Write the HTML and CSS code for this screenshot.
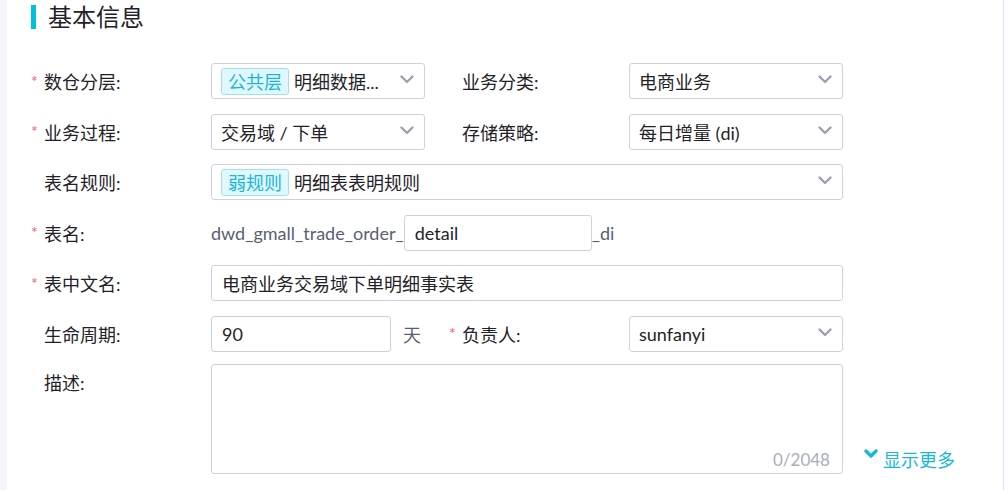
FILE: index.html
```html
<!DOCTYPE html>
<html lang="zh-CN">
<head>
<meta charset="utf-8">
<title>基本信息</title>
<link rel="stylesheet" href="styles.css">
</head>
<body>
<div class="page">
  <div class="card">
    <h2 class="title">基本信息</h2>
    <div class="form">
      <div class="label c1"><span class="star">*</span>数仓分层:</div>
      <div class="select c2">
        <span class="tag">公共层</span><span class="val">明细数据...</span>
        <svg class="chev" width="14" height="9" viewBox="0 0 14 9"><polyline points="1.5,1.5 7,7 12.5,1.5" fill="none" stroke="#9ba1b6" stroke-width="2.4" stroke-linecap="round" stroke-linejoin="round"/></svg>
      </div>
      <div class="label c4"><span class="star"></span>业务分类:</div>
      <div class="select c5">
        <span class="val">电商业务</span>
        <svg class="chev" width="14" height="9" viewBox="0 0 14 9"><polyline points="1.5,1.5 7,7 12.5,1.5" fill="none" stroke="#9ba1b6" stroke-width="2.4" stroke-linecap="round" stroke-linejoin="round"/></svg>
      </div>

      <div class="label c1"><span class="star">*</span>业务过程:</div>
      <div class="select c2">
        <span class="val">交易域 / 下单</span>
        <svg class="chev" width="14" height="9" viewBox="0 0 14 9"><polyline points="1.5,1.5 7,7 12.5,1.5" fill="none" stroke="#9ba1b6" stroke-width="2.4" stroke-linecap="round" stroke-linejoin="round"/></svg>
      </div>
      <div class="label c4"><span class="star"></span>存储策略:</div>
      <div class="select c5">
        <span class="val">每日增量 (di)</span>
        <svg class="chev" width="14" height="9" viewBox="0 0 14 9"><polyline points="1.5,1.5 7,7 12.5,1.5" fill="none" stroke="#9ba1b6" stroke-width="2.4" stroke-linecap="round" stroke-linejoin="round"/></svg>
      </div>

      <div class="label c1"><span class="star"></span>表名规则:</div>
      <div class="select wide">
        <span class="tag">弱规则</span><span class="val">明细表表明规则</span>
        <svg class="chev" width="14" height="9" viewBox="0 0 14 9"><polyline points="1.5,1.5 7,7 12.5,1.5" fill="none" stroke="#9ba1b6" stroke-width="2.4" stroke-linecap="round" stroke-linejoin="round"/></svg>
      </div>

      <div class="label c1"><span class="star">*</span>表名:</div>
      <div class="wide namerow">
        <span class="affix">dwd_gmall_trade_order_</span>
        <div class="input name-input">detail</div>
        <span class="affix">_di</span>
      </div>

      <div class="label c1"><span class="star">*</span>表中文名:</div>
      <div class="input wide">电商业务交易域下单明细事实表</div>

      <div class="label c1"><span class="star"></span>生命周期:</div>
      <div class="liferow c2">
        <div class="input life-input">90</div>
        <span class="unit">天</span>
      </div>
      <div class="label c4"><span class="star">*</span>负责人:</div>
      <div class="select c5">
        <span class="val">sunfanyi</span>
        <svg class="chev" width="14" height="9" viewBox="0 0 14 9"><polyline points="1.5,1.5 7,7 12.5,1.5" fill="none" stroke="#9ba1b6" stroke-width="2.4" stroke-linecap="round" stroke-linejoin="round"/></svg>
      </div>

      <div class="label c1 desc-label"><span class="star"></span>描述:</div>
      <div class="textarea wide">
        <span class="counter">0/2048</span>
      </div>
      <div class="more c6">
        <svg width="14" height="10" viewBox="0 0 14 10"><polyline points="2,2 7,7 12,2" fill="none" stroke="#16b9dc" stroke-width="3.4" stroke-linecap="round" stroke-linejoin="round"/></svg>
        <span>显示更多</span>
      </div>
    </div>
  </div>
</div>
</body>
</html>
```

FILE: styles.css
```css
* { box-sizing: border-box; }

html, body {
  margin: 0;
  padding: 0;
  height: 100%;
}

body {
  background: #f4f5f8;
  font-family: Lato, "Noto Sans CJK SC", sans-serif;
  font-size: 18px;
  color: #1f2229;
}

.page {
  padding-left: 7px;
  height: 100%;
}

.card {
  background: #fff;
  width: 997px;
  height: 100%;
  border-right: 1px solid #e6e8ee;
  padding: 5px 0 0 24px;
}

.title {
  margin: 0;
  height: 24px;
  display: flex;
  align-items: center;
  font-size: 24px;
  font-weight: normal;
  color: #1f2229;
  border-left: 5px solid #00c1de;
  padding-left: 12px;
  line-height: 1;
}

.form {
  margin-top: 34px;
  display: grid;
  grid-template-columns: 180px 214px 24px 180px 214px auto;
  grid-auto-rows: 36px;
  row-gap: 14.5px;
}

.c1 { grid-column: 1; }
.c2 { grid-column: 2; }
.c4 { grid-column: 4; }
.c5 { grid-column: 5; }
.c6 { grid-column: 6; }
.wide { grid-column: 2 / 6; }

.label {
  display: flex;
  align-items: center;
  height: 36px;
  color: #1f2229;
  white-space: nowrap;
}

.star {
  display: inline-block;
  width: 13px;
  color: #f2606f;
  font-size: 16px;
  position: relative;
  top: -1px;
}

.select, .input, .textarea {
  border: 1px solid #cdd1e2;
  border-radius: 3px;
  background: #fff;
  height: 36px;
}

.select {
  display: flex;
  align-items: center;
  padding: 0 10px 0 9px;
  gap: 5px;
}

.val {
  flex: 1;
  white-space: nowrap;
  overflow: hidden;
  color: #1f2229;
}

.chev {
  flex: none;
  margin-top: -3px;
}

.tag {
  flex: none;
  height: 27px;
  display: flex;
  align-items: center;
  padding: 0 6px;
  color: #19b7d9;
  background: #e0f7fc;
  border: 1px solid #9de2f0;
  border-radius: 3px;
}

.namerow {
  display: flex;
  align-items: center;
}

.affix {
  color: #5a5f75;
  white-space: nowrap;
}

.name-input {
  width: 188px;
  flex: none;
}

.input {
  display: flex;
  align-items: center;
  padding: 0 10px;
  color: #1f2229;
}

.liferow {
  display: flex;
  align-items: center;
  gap: 12px;
}

.life-input {
  width: 180px;
  flex: none;
}

.unit {
  color: #5a5f75;
}

.desc-label {
  align-self: start;
  margin-top: -2.5px;
}

.textarea {
  position: relative;
  height: 110px;
  margin-top: -2.5px;
}

.counter {
  position: absolute;
  right: 12px;
  bottom: 3px;
  color: #a8adc0;
  font-size: 17px;
}

.more {
  align-self: start;
  display: flex;
  align-items: flex-end;
  margin-left: 21px;
  margin-top: 80px;
  color: #16b9dc;
  font-size: 18px;
  white-space: nowrap;
}

.more svg {
  margin-bottom: 13px;
  margin-right: 5px;
}
```
